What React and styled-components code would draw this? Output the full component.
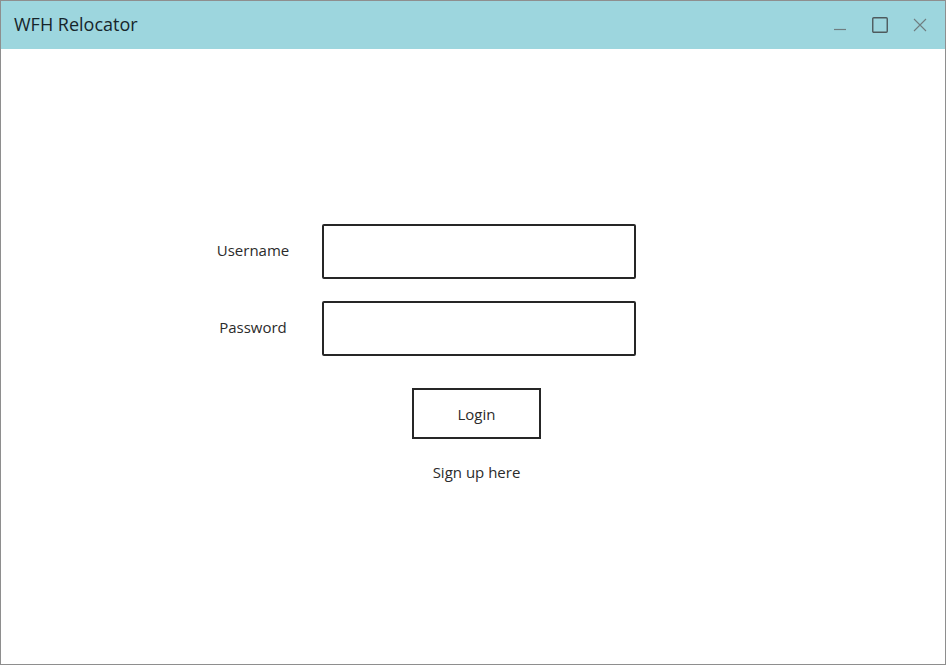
import React from "react";
import styled, { createGlobalStyle } from "styled-components";

const Global = createGlobalStyle`
  html, body { margin: 0; padding: 0; background: #ffffff; }
  body { font-family: "Open Sans", "Noto Sans", sans-serif; }
  * { box-sizing: border-box; }
`;

const Window = styled.div`
  width: 946px;
  height: 665px;
  border: 1px solid #8e8e8e;
  background: #ffffff;
  display: flex;
  flex-direction: column;
`;

const TitleBar = styled.div`
  height: 48px;
  background: #9dd6de;
  display: flex;
  align-items: center;
  padding-left: 13px;
  padding-right: 17px;
  padding-bottom: 2px;
`;

const Title = styled.div`
  font-size: 18px;
  color: #16252b;
  flex: 1;
`;

const Controls = styled.div`
  display: flex;
  align-items: center;
  gap: 24px;
  padding-top: 2px;
`;

const ControlButton = styled.div`
  width: 16px;
  height: 16px;
  display: flex;
  align-items: center;
  justify-content: center;
  svg { display: block; }
`;

const Content = styled.div`
  flex: 1;
  padding-top: 175px;
  padding-left: 187px;
`;

const Form = styled.div`
  display: grid;
  grid-template-columns: 130px 314px;
  column-gap: 4px;
  row-gap: 22px;
  align-items: center;
`;

const Label = styled.label`
  font-size: 15px;
  color: #2b2b2b;
  text-align: center;
  margin-top: -3px;
`;

const Input = styled.div`
  height: 55px;
  border: 2px solid #262626;
  border-radius: 2px;
`;

const Actions = styled.div`
  grid-column: 2;
  display: flex;
  flex-direction: column;
  align-items: center;
  margin-top: 10px;
  margin-left: -5px;
`;

const LoginButton = styled.div`
  width: 129px;
  height: 51px;
  border: 2px solid #262626;
  display: flex;
  align-items: center;
  justify-content: center;
  font-size: 15px;
  color: #2b2b2b;
`;

const SignUp = styled.div`
  margin-top: 23px;
  font-size: 15px;
  line-height: 20px;
  color: #2b2b2b;
`;

export default function App() {
  return (
    <>
      <Global />
      <Window>
        <TitleBar>
          <Title>WFH Relocator</Title>
          <Controls>
            <ControlButton>
              <svg width="16" height="16" viewBox="0 0 16 16">
                <line x1="2" y1="12.5" x2="14" y2="12.5" stroke="#6f7d80" strokeWidth="1.2" />
              </svg>
            </ControlButton>
            <ControlButton>
              <svg width="16" height="16" viewBox="0 0 16 16">
                <rect x="0.75" y="0.75" width="14.5" height="14.5" rx="1" fill="none" stroke="#4e5a5d" strokeWidth="1.4" />
              </svg>
            </ControlButton>
            <ControlButton>
              <svg width="16" height="16" viewBox="0 0 16 16">
                <path d="M2 2 L14 14 M14 2 L2 14" stroke="#6f7d80" strokeWidth="1.1" fill="none" />
              </svg>
            </ControlButton>
          </Controls>
        </TitleBar>
        <Content>
          <Form>
            <Label>Username</Label>
            <Input />
            <Label>Password</Label>
            <Input />
            <Actions>
              <LoginButton>Login</LoginButton>
              <SignUp>Sign up here</SignUp>
            </Actions>
          </Form>
        </Content>
      </Window>
    </>
  );
}
